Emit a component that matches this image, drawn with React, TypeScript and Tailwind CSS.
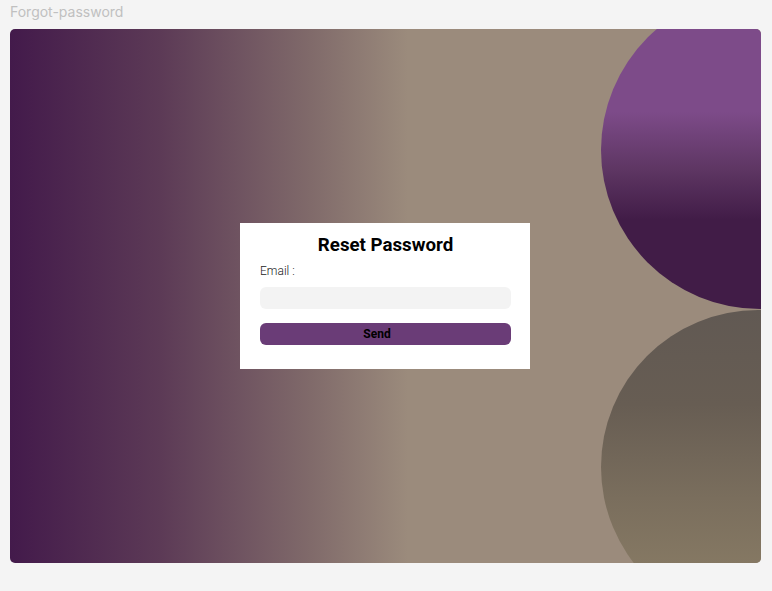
export default function App() {
  return (
    <div className="min-h-screen w-full bg-[#f4f4f4] px-[10px] pt-[2px] font-['Inter','Liberation_Sans',sans-serif]">
      <div className="h-[20px] text-[14px] leading-[20px] text-[#c0c0c0]">Forgot-password</div>
      <div className="relative mt-[7px] flex h-[534px] w-[751px] items-center justify-center overflow-hidden rounded-[5px] pr-[1px] bg-[linear-gradient(90deg,#431a4b_0%,#5c3a56_20%,#806a6a_40%,#9b8b7c_53%,#9b8b7c_100%)]">
        <div className="absolute left-[591px] top-[-38px] h-[318px] w-[318px] rounded-full bg-[linear-gradient(180deg,#7d4b89_0%,#7d4b89_38%,#5e3663_56%,#411c47_72%,#411c47_100%)]" />
        <div className="absolute left-[591px] top-[281px] h-[314px] w-[314px] rounded-full bg-[linear-gradient(180deg,#615953_0%,#675d53_30%,#7a6e5d_60%,#877a64_85%)]" />
        <div className="relative z-10 flex h-[146px] w-[290px] flex-col bg-white pl-[20px] pr-[19px] pt-[10px] font-['Roboto',sans-serif]">
          <h1 className="text-center text-[18.7px] font-bold leading-[24px] text-black">Reset Password</h1>
          <label className="mt-[6px] text-[12px] font-light leading-[16px] text-[#222]">Email :</label>
          <input className="mt-[8px] h-[22px] w-full rounded-[6px] bg-[#f3f3f3] outline-none" />
          <button className="mt-[14px] h-[22px] w-full rounded-[6px] bg-[#6a3c77] pr-[17px] text-[12px] font-bold leading-[22px] text-black">Send</button>
        </div>
      </div>
    </div>
  );
}
